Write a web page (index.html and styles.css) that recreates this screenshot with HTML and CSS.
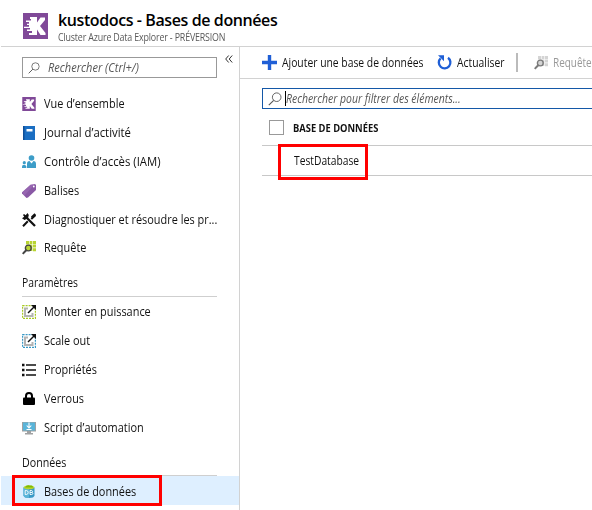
FILE: index.html
```html
<!DOCTYPE html>
<html lang="fr">
<head>
<meta charset="utf-8">
<title>kustodocs - Bases de données</title>
<link rel="stylesheet" href="styles.css">
</head>
<body>
<svg class="defs" width="0" height="0">
  <symbol id="kusto" viewBox="0 0 25 26">
    <path fill="#804998" d="M0 0h25v26H0z"/>
    <path fill="#fff" d="M7 4h7v5.500L17.500 4.500H22v2.500l-5 6L22.500 20v2H17.500L14 16.500V22H6v-2h3v-2H4v-1.500h3V15H1v-1.200h5V12H4v-1.200h2V9H3V7.500h5V6H7z"/>
  </symbol>
  <symbol id="mag" viewBox="0 0 14 14">
    <circle cx="8.700" cy="5.200" r="4.300" fill="none" stroke="currentColor" stroke-width=".9"/>
    <path d="M5.700 8.300L.8 13.200" fill="none" stroke="currentColor" stroke-width="1.100"/>
  </symbol>
  <symbol id="query" viewBox="0 0 14 14">
    <path class="cells" d="M4 0h3v3H4zM7.600 0h2.800v3H7.600zM11 0h3v3h-3zM11 3.600h3v3h-3zM11 7.200h3v3h-3zM4 3.600h6.400v6.400H4z"/>
    <circle cx="6.300" cy="7" r="2.900" class="lens"/>
    <path d="M4.200 9.200L.7 12.900" class="handle"/>
  </symbol>
  <symbol id="scale" viewBox="0 0 14 14">
    <path d="M.6.6h12.800v12.800H.6z" fill="none" stroke="currentColor" stroke-width="1.200" stroke-dasharray="2 1"/>
    <path d="M6 3.500H3v7.500h7.500V8" fill="none" stroke="#b3b3b3" stroke-width="2"/>
    <path d="M6 8L12 2" stroke="#111" stroke-width="1.500"/>
    <path d="M9 0H14v5z" fill="#111"/>
  </symbol>
</svg>

<header class="top">
  <svg class="logo"><use href="#kusto"/></svg>
  <div>
    <h1>kustodocs - Bases de données</h1>
    <p>Cluster Azure Data Explorer - PRÉVERSION</p>
  </div>
</header>

<div class="body">
  <aside>
    <div class="find">
      <div class="box"><svg><use href="#mag"/></svg><span>Rechercher (Ctrl+/)</span></div>
      <svg class="collapse" viewBox="0 0 8 8"><path d="M3.700.5L.7 4l3 3.500M7.200.5l-3 3.500 3 3.500" fill="none" stroke="#333"/></svg>
    </div>
    <ul class="main-nav">
      <li><svg><use href="#kusto"/></svg><span>Vue d’ensemble</span></li>
      <li class="wide"><svg viewBox="0 0 14 14"><path fill="#1b6ec2" d="M1 0h12v14H1z"/><path fill="#0f4e97" d="M1 0h1.500v14H1z"/><path fill="#fff" d="M4.500 3h6v2.500h-6z"/></svg><span>Journal d’activité</span></li>
      <li class="wide"><svg viewBox="0 0 14 14" fill="#3d9dc8"><circle cx="9.500" cy="3" r="2.800"/><path d="M5 13V9q0-3 2.500-3l2 2.500 2-2.500Q14 6 14 9v4z"/><circle cx="2.300" cy="7.700" r="1.600"/><path d="M0 13v-1.500Q0 9.700 2 9.700t2.300 1.800V13z"/></svg><span>Contrôle d’accès (IAM)</span></li>
      <li><svg viewBox="0 0 14 14"><path fill="#8958a5" d="M8.500.7L13 0l1 1v5L6 13.500 4.500 14 0 9.500V8.300z"/><path fill="#a97bc0" d="M8.500.7L13 0 2.500 11.500 0 9z" opacity=".4"/><circle cx="11.800" cy="2.500" r=".9" fill="#fff"/></svg><span>Balises</span></li>
      <li><svg viewBox="0 0 14 14"><path d="M3.500 3.500L13 13" stroke="#111" stroke-width="2.300"/><path d="M5.500 0L3.700 2.200 2 1 1 2l1.200 1.800L0 5.300 2.500 7 6 5.300 6.800 2z" fill="#111"/><path d="M9.300 6L13.600 2M1 13.300l4.800-5" stroke="#111" stroke-width="2"/><path d="M9 3.500L12.500.2l1.300 1.300-3.500 4z" fill="#111"/></svg><span>Diagnostiquer et résoudre les pr...</span></li>
      <li><svg><use href="#query"/></svg><span>Requête</span></li>
    </ul>
    <h2><span>Paramètres</span></h2>
    <ul>
      <li><svg class="green"><use href="#scale"/></svg><span>Monter en puissance</span></li>
      <li><svg class="blue"><use href="#scale"/></svg><span>Scale out</span></li>
      <li><svg viewBox="0 0 14 14"><path d="M4 2h10M4 7h10M4 12h10" stroke="#111" stroke-width="1.500"/><path d="M0 .7h2.500v2.500H0zM0 5.700h2.500v2.500H0zM0 10.700h2.500v2.500H0z" fill="#111"/></svg><span>Propriétés</span></li>
      <li><svg viewBox="0 0 14 14"><path d="M4 7V4q0-3 3-3t3 3v3" fill="none" stroke="#000" stroke-width="2"/><rect x="1" y="5.500" width="12" height="7.500" rx="1"/></svg><span>Verrous</span></li>
      <li><svg viewBox="0 0 14 14"><path fill="#a0a1a2" d="M0 1h14v9.500H0zM5 10.500h4V12h2v1.500H3V12h2z"/><path fill="#59b4d9" d="M1 1.500h12v8H1z"/><path d="M7 1.500v5M4.700 4.500L7 7l2.300-2.500M4.500 8.500h5" stroke="#fff" stroke-width="1.100" fill="none"/></svg><span>Script d’automation</span></li>
    </ul>
    <h2 class="data"><span>Données</span></h2>
    <ul>
      <li class="selected"><svg viewBox="0 0 14 14"><path fill="#3999c6" d="M1.500 3.500h11v8Q12 14 7 14t-5.500-2.500z"/><path fill="#59b4d9" d="M1.500 3.500H7V14q-5 0-5.500-2.500z"/><ellipse cx="7" cy="3.300" rx="5.500" ry="2" fill="#b8d432"/><path fill="#7fba00" d="M3 3.500Q5 .3 8 1.700q3-.7 3 1.800z"/><path d="M3.200 6.500v4h1Q6.200 10.500 6.200 8.500t-2-2zM8 6.500v4h1.700q1.400-.2 1.200-1.200-.1-.6-.9-.8.8-.4.600-1.100-.2-.9-1.400-.9zM8 8.500h2" fill="none" stroke="#fff" stroke-width=".9"/></svg><span>Bases de données</span></li>
    </ul>
  </aside>
  <main>
    <div class="toolbar">
      <svg class="plus" viewBox="0 0 15 15"><path d="M7.500 0v15M0 7.500h15" stroke="#1f5fd6" stroke-width="3.400"/></svg><span class="t1">Ajouter une base de données</span>
      <svg class="refresh" viewBox="0 0 15 15"><path d="M11 2.800A5.800 5.800 0 1 1 3.600 3.300" fill="none" stroke="#1f5fd6" stroke-width="2.300"/><path d="M1 .2h6v6z" fill="#1f5fd6"/></svg><span class="t2">Actualiser</span>
      <i></i>
      <svg class="gray"><use href="#query"/></svg><span class="t3">Requête</span>
    </div>
    <div class="filter"><svg><use href="#mag"/></svg><b></b><span>Rechercher pour filtrer des éléments...</span></div>
    <div class="thead"><div class="check"></div><span>BASE DE DONNÉES</span></div>
    <div class="row"><span>TestDatabase</span></div>
  </main>
</div>
<div class="mark mark-nav"></div>
<div class="mark mark-row"></div>
</body>
</html>
```
FILE: styles.css
```css
* { box-sizing: border-box; margin: 0; padding: 0; }
body { width: 592px; height: 510px; overflow: hidden; position: relative; background: #fff; color: #111; font: 12px/16px "Open Sans", "Noto Sans", sans-serif; white-space: nowrap; }
.defs { position: absolute; }
svg { flex: none; width: 14px; height: 14px; display: block; }
span { display: inline-block; transform-origin: 0 50%; }
ul { list-style: none; }

.top { height: 47px; margin-left: 1px; padding: 10px 0 0 22px; display: flex; gap: 10px; border-bottom: 1px solid #d2d2d2; }
.logo { width: 25px; height: 26px; margin-top: 3px; }
h1 { width: 230px; font-size: 16px; line-height: 20px; font-weight: 550; color: #000; letter-spacing: -.4px; }
.top p { width: 200px; font-size: 10.5px; line-height: 14px; color: #595959; letter-spacing: -.2px; transform: scaleX(.845); transform-origin: 0 50%; }

.body { display: flex; height: 463px; }
aside { flex: none; width: 240px; border-right: 1px solid #d2d2d2; }
.find { display: flex; gap: 8px; padding: 10px 0 0 22px; height: 43px; }
.box { width: 195px; height: 21px; border: 1px solid #999; display: flex; align-items: center; padding-left: 5px; gap: 8px; color: #555; font-style: italic; }
.box svg { width: 12px; height: 12px; }
.box span { transform: scaleX(.92); }
.collapse { width: 8px; height: 8px; margin-top: -2px; }

li { height: 29px; display: flex; align-items: center; padding-left: 22px; gap: 8px; }
li span { transform: scaleX(.91); }
li.wide span { transform: scaleX(.945); }
.main-nav li { height: 28.8px; }
h2 { font-size: 12px; font-weight: 400; height: 34px; margin: 0 22px 1px; padding-top: 12px; border-bottom: 1px solid #cfcfcf; }
h2 span { transform: scaleX(.86); }
h2.data { height: 33px; margin-bottom: 0; }
h2.data span { transform: scaleX(.89); }
.selected { background: #deefff; margin-left: 1px; padding: 3px 0 0 21px; }
.selected svg { margin-top: -2px; }
.cells { fill: #b8d432; }
.lens { fill: #b8d432; stroke: #444; stroke-width: 1.4; }
.handle { stroke: #444; stroke-width: 2; }
.green { color: #a9c926; }
.blue { color: #3999c6; }

main { flex: 1; min-width: 0; }
.toolbar { height: 32px; display: flex; align-items: center; border-bottom: 1px solid #d2d2d2; padding-left: 22px; }
.toolbar span { flex: none; transform: scaleX(.862); }
.plus { width: 15px; height: 15px; margin-right: 5px; }
.t1 { width: 155px; }
.refresh { width: 15px; height: 15px; margin-right: 5px; }
.t2 { width: 59px; }
.toolbar i { flex: none; width: 2px; height: 19px; background: #bbb; margin-right: 16px; }
.gray { margin-right: 5px; filter: grayscale(1); opacity: .7; }
.toolbar .t3 { width: 38px; color: #999; transform: scaleX(.83); }
.filter { margin: 9px 0 0 22px; height: 21px; border: 1px solid #1458a7; border-right: 0; display: flex; align-items: center; padding-left: 5px; color: #555; font-style: italic; }
.filter b { width: 1px; height: 15px; background: #000; margin-left: 3px; }
.filter span { transform: scaleX(.87); }
.thead { margin-left: 22px; height: 37px; border-bottom: 1px solid #c8c8c8; display: flex; align-items: center; padding: 1px 0 0 7px; gap: 9px; font-size: 10px; font-weight: 700; color: #111; }
.thead span { transform: scaleX(.935); }
.check { width: 15px; height: 15px; border: 1px solid #999; }
.row { margin-left: 22px; height: 30px; border-bottom: 1px solid #c8c8c8; padding: 7px 0 0 32px; }
.row span { transform: scaleX(.855); }

.mark { position: absolute; border: 3px solid #f00; }
.mark-nav { left: 12px; top: 475px; width: 150px; height: 31px; }
.mark-row { left: 278px; top: 144px; width: 90px; height: 36px; }
```
